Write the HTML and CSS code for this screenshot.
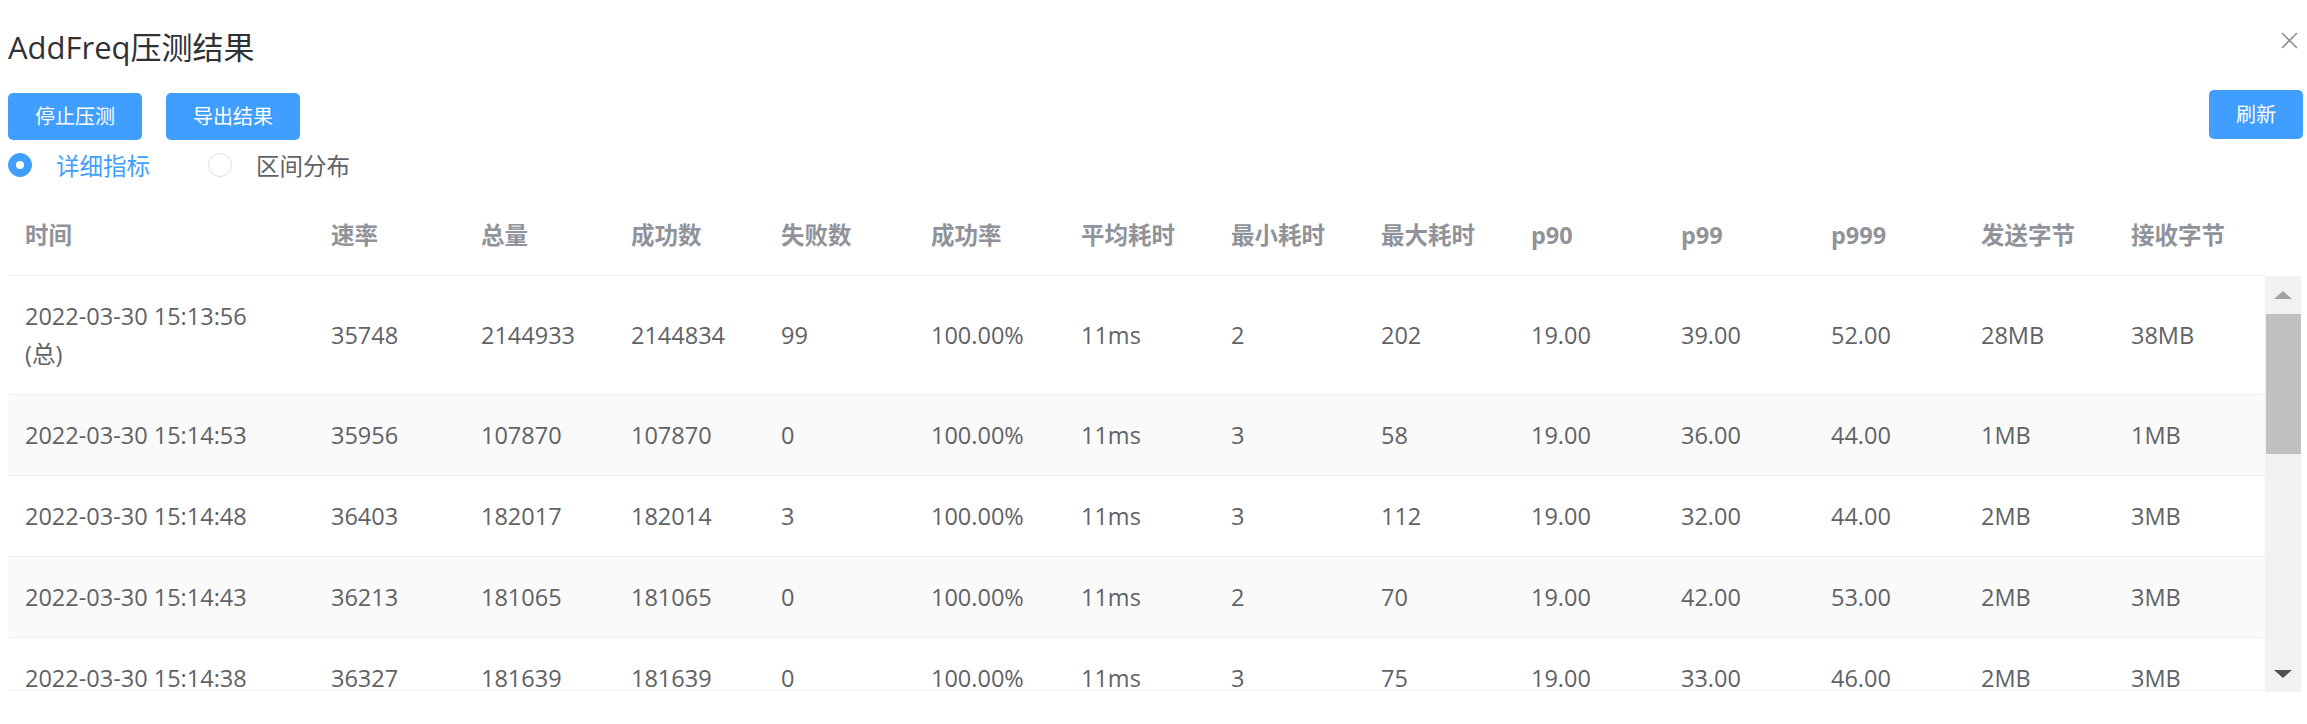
FILE: index.html
```html
<!DOCTYPE html>
<html lang="zh-CN">
<head>
<meta charset="utf-8">
<title>AddFreq压测结果</title>
<link rel="stylesheet" href="styles.css">
</head>
<body>
<div class="dialog">
  <div class="title-row">
    <span class="title">AddFreq压测结果</span>
    <svg class="close" width="17" height="17" viewBox="0 0 17 17"><path d="M1 1 L16 16 M16 1 L1 16" stroke="#909399" stroke-width="1.7" fill="none"/></svg>
  </div>
  <div class="toolbar">
    <div class="btn-group">
      <button class="btn">停止压测</button>
      <button class="btn">导出结果</button>
    </div>
    <button class="btn btn-refresh">刷新</button>
  </div>
  <div class="radio-row">
    <label class="radio checked"><span class="radio-dot"></span><span class="radio-label">详细指标</span></label>
    <label class="radio"><span class="radio-dot"></span><span class="radio-label">区间分布</span></label>
  </div>
  <div class="table">
    <div class="row head">
      <div class="cell">时间</div><div class="cell">速率</div><div class="cell">总量</div><div class="cell">成功数</div><div class="cell">失败数</div><div class="cell">成功率</div><div class="cell">平均耗时</div><div class="cell">最小耗时</div><div class="cell">最大耗时</div><div class="cell">p90</div><div class="cell">p99</div><div class="cell">p999</div><div class="cell">发送字节</div><div class="cell">接收字节</div>
    </div>
    <div class="head-gutter"></div>
    <div class="body-wrap">
      <div class="row">
        <div class="cell multi">2022-03-30 15:13:56<br>(总)</div><div class="cell">35748</div><div class="cell">2144933</div><div class="cell">2144834</div><div class="cell">99</div><div class="cell">100.00%</div><div class="cell">11ms</div><div class="cell">2</div><div class="cell">202</div><div class="cell">19.00</div><div class="cell">39.00</div><div class="cell">52.00</div><div class="cell">28MB</div><div class="cell">38MB</div>
      </div>
      <div class="row stripe">
        <div class="cell">2022-03-30 15:14:53</div><div class="cell">35956</div><div class="cell">107870</div><div class="cell">107870</div><div class="cell">0</div><div class="cell">100.00%</div><div class="cell">11ms</div><div class="cell">3</div><div class="cell">58</div><div class="cell">19.00</div><div class="cell">36.00</div><div class="cell">44.00</div><div class="cell">1MB</div><div class="cell">1MB</div>
      </div>
      <div class="row">
        <div class="cell">2022-03-30 15:14:48</div><div class="cell">36403</div><div class="cell">182017</div><div class="cell">182014</div><div class="cell">3</div><div class="cell">100.00%</div><div class="cell">11ms</div><div class="cell">3</div><div class="cell">112</div><div class="cell">19.00</div><div class="cell">32.00</div><div class="cell">44.00</div><div class="cell">2MB</div><div class="cell">3MB</div>
      </div>
      <div class="row stripe">
        <div class="cell">2022-03-30 15:14:43</div><div class="cell">36213</div><div class="cell">181065</div><div class="cell">181065</div><div class="cell">0</div><div class="cell">100.00%</div><div class="cell">11ms</div><div class="cell">2</div><div class="cell">70</div><div class="cell">19.00</div><div class="cell">42.00</div><div class="cell">53.00</div><div class="cell">2MB</div><div class="cell">3MB</div>
      </div>
      <div class="row">
        <div class="cell">2022-03-30 15:14:38</div><div class="cell">36327</div><div class="cell">181639</div><div class="cell">181639</div><div class="cell">0</div><div class="cell">100.00%</div><div class="cell">11ms</div><div class="cell">3</div><div class="cell">75</div><div class="cell">19.00</div><div class="cell">33.00</div><div class="cell">46.00</div><div class="cell">2MB</div><div class="cell">3MB</div>
      </div>
    </div>
    <div class="scrollbar">
      <div class="sb-btn"><span class="arrow-up"></span></div>
      <div class="sb-track"><div class="sb-thumb"></div></div>
      <div class="sb-btn"><span class="arrow-down"></span></div>
    </div>
  </div>
</div>
</body>
</html>
```
FILE: styles.css
```css
* { box-sizing: border-box; }
html, body { margin: 0; padding: 0; background: #fff; }
body {
  font-family: "Open Sans", "Noto Sans CJK SC", sans-serif;
  color: #606266;
}
.dialog {
  padding: 0 4px 0 8px;
}
.title-row {
  display: flex;
  justify-content: space-between;
  align-items: flex-start;
  padding-top: 26px;
  height: 68px;
}
.title {
  font-size: 31px;
  line-height: 42px;
  color: #303133;
}
.close {
  margin-top: 6px;
  margin-right: 5px;
}
.toolbar {
  display: flex;
  justify-content: space-between;
  align-items: flex-start;
  margin-top: 22px;
  height: 51px;
}
.btn-group {
  display: flex;
  gap: 24px;
  margin-top: 3px;
}
.btn {
  font-family: inherit;
  border: none;
  background: #409EFF;
  color: #fff;
  font-size: 20px;
  height: 47px;
  padding: 0 27px;
  border-radius: 5px;
  line-height: 47px;
}
.btn-refresh {
  height: 49px;
  line-height: 49px;
}
.radio-row {
  display: flex;
  align-items: center;
  height: 48px;
  gap: 58px;
}
.radio {
  display: flex;
  align-items: center;
  gap: 24px;
  font-size: 23.5px;
}
.radio-dot {
  width: 24px;
  height: 24px;
  border-radius: 50%;
  border: 1px solid #DCDFE6;
  background: #fff;
  display: flex;
  align-items: center;
  justify-content: center;
}
.radio.checked .radio-dot {
  background: #409EFF;
  border-color: #409EFF;
}
.radio.checked .radio-dot::after {
  content: "";
  width: 8px;
  height: 8px;
  border-radius: 50%;
  background: #fff;
}
.radio.checked .radio-label { color: #409EFF; }
.table {
  margin-top: 6px;
  margin-right: 2px;
  display: grid;
  grid-template-columns: 1fr 36px;
}
.row {
  display: grid;
  grid-template-columns: 306px repeat(12, 150px) 1fr;
  align-items: center;
  border-bottom: 1px solid #EBEEF5;
  background: #fff;
}
.row.stripe { background: #FAFAFA; }
.cell {
  padding: 26px 17px;
  font-size: 23.5px;
  line-height: 28px;
  white-space: nowrap;
}
.cell.multi {
  padding: 21px 17px;
  line-height: 38px;
}
.head .cell {
  color: #909399;
  font-weight: bold;
}
.body-wrap {
  height: 415px;
  overflow: hidden;
  border-bottom: 1px solid #EBEEF5;
}
.scrollbar {
  height: 416px;
  background: #F1F1F1;
  display: flex;
  flex-direction: column;
}
.sb-btn {
  height: 37px;
  display: flex;
  align-items: center;
  justify-content: center;
}
.sb-track {
  flex: 1;
  padding-top: 1px;
}
.sb-thumb {
  height: 140px;
  margin-left: 1px;
  background: #C1C1C1;
}
.arrow-up {
  width: 0;
  height: 0;
  border-left: 9px solid transparent;
  border-right: 9px solid transparent;
  border-bottom: 8px solid #A3A3A3;
}
.arrow-down {
  width: 0;
  height: 0;
  border-left: 9px solid transparent;
  border-right: 9px solid transparent;
  border-top: 8px solid #505050;
}
```
